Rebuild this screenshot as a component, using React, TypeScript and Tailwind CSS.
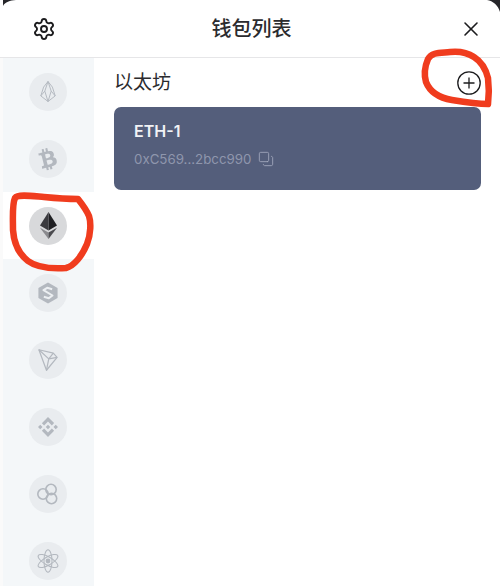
import { ReactNode } from "react";
import { Copy, Settings, X } from "lucide-react";
import { FaBtc } from "react-icons/fa";
import { SiBinance } from "react-icons/si";

const grey = "#b3b8bf";

function EosIcon() {
  return (
    <svg width="16" height="23" viewBox="0 0 20 27" fill="none" stroke={grey} strokeWidth="1.2" strokeLinejoin="round">
      <path d="M10 1 L15.5 8 L19 19 L10 26 L1 19 L4.5 8 Z" />
      <path d="M10 1 L6 13 L10 26 L14 13 Z" />
      <path d="M1 19 L6 13 M19 19 L14 13" />
    </svg>
  );
}

function EthIcon() {
  return (
    <svg width="17" height="27" viewBox="0 0 24 38">
      <path d="M12 0 L24 19 L12 26 Z" fill="#1f1f22" />
      <path d="M12 0 L0 19 L12 26 Z" fill="#3b3b3f" />
      <path d="M0 22 L12 29 L12 38 Z" fill="#8a8a8e" />
      <path d="M24 22 L12 29 L12 38 Z" fill="#4b4b4f" />
    </svg>
  );
}

function SwftIcon() {
  return (
    <svg width="20" height="22" viewBox="0 0 24 26" fill="none">
      <path d="M12 0.5 L23.5 7 V19 L12 25.5 L0.5 19 V7 Z" fill={grey} />
      <path d="M17 8.5 L11 6.8 L6.6 9.6 L17.4 16 L13 19.2 L7 17.5" stroke="#eceff2" strokeWidth="2.4" strokeLinejoin="round" />
    </svg>
  );
}

function TronIcon() {
  return (
    <svg width="20" height="22" viewBox="0 0 26 29" fill="none" stroke={grey} strokeWidth="1.6" strokeLinejoin="round">
      <path d="M1 1 L20 5.5 L25 11 L11 28 Z" />
      <path d="M1 1 L14 13 L11 28 M14 13 L25 11 M14 13 L20 5.5" />
    </svg>
  );
}

function RingsIcon() {
  return (
    <svg width="22" height="22" viewBox="0 0 22 22" fill="none" stroke={grey} strokeWidth="1.6">
      <circle cx="14" cy="6.5" r="5.2" />
      <circle cx="6" cy="11" r="5.2" />
      <circle cx="14.5" cy="15.5" r="5.2" />
    </svg>
  );
}

function AtomIcon() {
  return (
    <svg width="24" height="24" viewBox="0 0 30 30" fill="none" stroke={grey} strokeWidth="1.3">
      <ellipse cx="15" cy="15" rx="5" ry="14" />
      <ellipse cx="15" cy="15" rx="5" ry="14" transform="rotate(60 15 15)" />
      <ellipse cx="15" cy="15" rx="5" ry="14" transform="rotate(120 15 15)" />
      <circle cx="15" cy="15" r="3" fill={grey} stroke="none" />
    </svg>
  );
}

interface Coin {
  icon: ReactNode;
  active?: boolean;
}

const coins: Coin[] = [
  { icon: <EosIcon /> },
  { icon: <FaBtc size={22} color={grey} className="-rotate-[14deg]" /> },
  { icon: <EthIcon />, active: true },
  { icon: <SwftIcon /> },
  { icon: <TronIcon /> },
  { icon: <SiBinance size={20} color={grey} /> },
  { icon: <RingsIcon /> },
  { icon: <AtomIcon /> },
];

export default function App() {
  return (
    <div className="relative w-[500px] h-[586px] overflow-hidden bg-white text-[#2b2b2e] font-['Inter','Noto_Sans_CJK_SC',sans-serif]">
      {/* Header */}
      <header className="flex items-center h-[58px] border-b border-[#e6e6e8] pl-[32px] pr-[17px]">
        <Settings size={24} strokeWidth={1.9} className="text-[#1c1c1e]" />
        <h1 className="flex-1 text-center text-[20px] font-medium leading-none pr-[12px]">钱包列表</h1>
        <X size={24} strokeWidth={1.6} className="text-[#1c1c1e]" />
      </header>

      <div className="flex">
        {/* Coin sidebar */}
        <aside className="w-[94px] shrink-0 pl-[3px] bg-[#fafafa]">
          {coins.map((coin, i) => (
            <div
              key={i}
              className={`h-[67px] flex items-center justify-center pr-[1px] ${coin.active ? "bg-white" : "bg-[#f4f7f9]"}`}
            >
              <div
                className={`w-[38px] h-[38px] rounded-full flex items-center justify-center ${coin.active ? "bg-[#d8d9db]" : "bg-[#e9ecef]"}`}
              >
                {coin.icon}
              </div>
            </div>
          ))}
        </aside>

        {/* Wallet list */}
        <main className="flex-1 pl-[20px] pr-[19px]">
          <div className="flex items-center justify-between h-[49px]">
            <h2 className="text-[19px] leading-none">以太坊</h2>
            <svg width="24" height="24" viewBox="0 0 24 24" fill="none" stroke="#1c1c1e" strokeWidth="1.3">
              <circle cx="12" cy="12" r="11.2" />
              <path d="M12 6.5 V17.5 M6.5 12 H17.5" />
            </svg>
          </div>
          <div className="h-[83px] rounded-[7px] bg-[#545e7b] pl-[20px] pt-[14px]">
            <div className="text-[16px] font-semibold leading-[20px] text-[#f1f2f5]">ETH-1</div>
            <div className="flex items-center mt-[8px] text-[13.3px] leading-[20px] text-[#8f96ad]">
              <span>0xC569...2bcc990</span>
              <Copy size={16} strokeWidth={1.3} className="ml-[7px] -scale-x-100 -scale-y-100 text-[#a2a8bd]" />
            </div>
          </div>
        </main>
      </div>

      {/* Hand-drawn red annotations over the screenshot */}
      <svg width="500" height="586" viewBox="0 0 500 586" fill="none" stroke="#f03c1e" strokeWidth="6.5" strokeLinecap="round" strokeLinejoin="round" className="absolute inset-0 pointer-events-none">
        <path d="M44 197 C32 196 18 194 15 198 C12 204 13 218 13 230 C14 245 19 254 28 261 C36 267 50 269 66 268 C74 266 82 256 87 244 C91 234 91 222 89 216 C86 209 82 204 78 199 C66 199 54 198 44 197 Z" />
        <path d="M450 52 C440 53 432 52 428 59 C425 66 424 75 426 82 C430 92 440 98 452 100 C464 102 478 104 488 104 C489 96 489 86 488 78 C486 70 482 62 474 57 C468 53 460 51 450 52 Z" />
      </svg>

      {/* Dark device corners */}
      <svg width="500" height="14" viewBox="0 0 500 14" className="absolute left-0 top-0 pointer-events-none">
        <path d="M3 0 H16 C10 0.5 5 2 3 6 Z" fill="#26262a" />
        <path d="M487 0 H500 V12 C498 5 493 1 487 0 Z" fill="#26262a" />
      </svg>
    </div>
  );
}
